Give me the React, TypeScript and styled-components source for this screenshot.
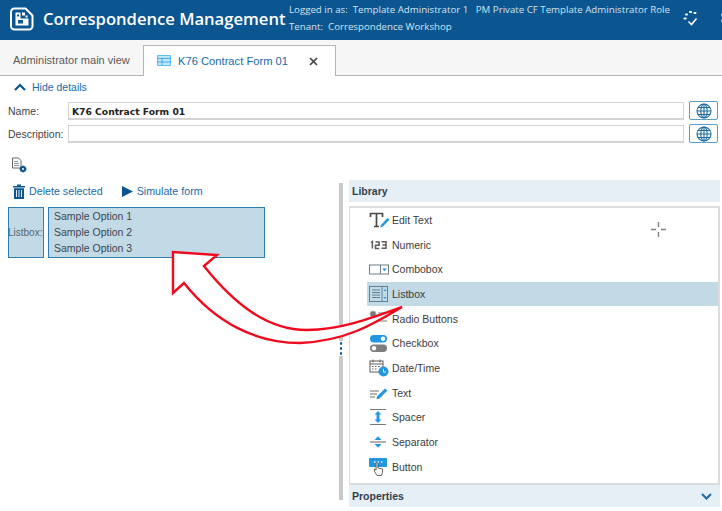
import React from "react";
import styled, { createGlobalStyle } from "styled-components";

const Global = createGlobalStyle`
  html, body { margin: 0; padding: 0; background: #fff; }
  #root { width: 722px; height: 511px; overflow: hidden; }
`;

const Page = styled.div`
  position: relative;
  width: 722px;
  height: 511px;
  overflow: hidden;
  display: flex;
  flex-direction: column;
  font-family: "Liberation Sans", Arial, sans-serif;
  font-size: 10.5px;
  color: #3c3c3c;
`;

const Header = styled.header`
  height: 40px;
  flex: none;
  background: #0b5590;
  display: flex;
  align-items: center;
  color: #fff;
  padding-left: 10px;
`;
const Logo = styled.svg`
  width: 24px;
  height: 24px;
  flex: none;
  margin-top: -2px;
`;
const AppTitle = styled.div`
  font-family: "Open Sans", sans-serif;
  font-weight: 600;
  font-size: 16.6px;
  margin: -3px 0 0 9px;
  width: 246px;
  white-space: nowrap;
`;
const UserInfo = styled.div`
  font-family: "Open Sans", sans-serif;
  font-size: 9.7px;
  line-height: 17px;
  color: #d4e3ee;
  white-space: pre;
  margin-top: -5px;
  flex: none;
`;
const HeaderIcons = styled.div`
  position: absolute;
  right: -8px;
  top: 9px;
  display: flex;
  align-items: center;
  gap: 18px;
`;

const TabBar = styled.nav`
  height: 36px;
  flex: none;
  box-sizing: border-box;
  background: #f6f6f6;
  border-bottom: 1px solid #b5b5b5;
  display: flex;
  align-items: flex-end;
`;
const Tab = styled.div<{ $active?: boolean }>`
  box-sizing: border-box;
  display: flex;
  align-items: center;
  height: ${(p) => (p.$active ? "31px" : "30px")};
  width: ${(p) => (p.$active ? "193px" : "143px")};
  padding-left: 13px;
  font-size: ${(p) => (p.$active ? "11.2px" : "11px")};
  color: ${(p) => (p.$active ? "#1a6aa5" : "#5a5a5a")};
  background: ${(p) => (p.$active ? "#fff" : "transparent")};
  border: ${(p) => (p.$active ? "1px solid #b5b5b5" : "none")};
  border-bottom: none;
  margin-bottom: ${(p) => (p.$active ? "-1px" : "0")};
`;
const TabLabel = styled.span`
  margin-left: 7px;
  width: 131px;
  white-space: nowrap;
`;

const Details = styled.section`
  flex: none;
  padding: 3px 4px 0 8px;
`;
const HideDetails = styled.div`
  display: flex;
  align-items: center;
  gap: 6px;
  height: 16px;
  margin: 0 0 6px 6px;
  color: #1a6aa5;
  font-size: 10.5px;
`;
const FieldRow = styled.div`
  display: flex;
  align-items: center;
  height: 19px;
  margin-top: 4px;
`;
const FieldLabel = styled.label`
  width: 60px;
  flex: none;
  font-size: 10.5px;
  color: #3f3f3f;
`;
const FieldInput = styled.div`
  width: 616px;
  height: 18px;
  box-sizing: border-box;
  flex: none;
  border: 1px solid #d4d4d4;
  border-bottom-width: 2px;
  padding: 2px 0 0 3px;
  font-family: "DejaVu Sans", sans-serif;
  font-weight: 700;
  font-size: 9.2px;
  line-height: 14px;
  color: #222;
  white-space: nowrap;
`;
const GlobeButton = styled.button`
  width: 29px;
  height: 19px;
  box-sizing: border-box;
  flex: none;
  margin-left: 5px;
  padding: 0;
  background: #fff;
  border: 1.5px solid #5b9fc6;
  border-radius: 2px;
  display: flex;
  align-items: center;
  justify-content: center;
`;
const SettingsRow = styled.div`
  height: 20px;
  margin: 14px 0 0 3px;
  display: flex;
  align-items: flex-start;
`;

const Body = styled.div`
  flex: 1;
  min-height: 0;
  display: flex;
`;
const LeftPane = styled.div`
  width: 339px;
  flex: none;
  padding: 6px 0 0 8px;
  box-sizing: border-box;
`;
const Toolbar = styled.div`
  display: flex;
  align-items: center;
  height: 16px;
  margin-left: 5px;
  color: #1a6aa5;
  font-size: 10.7px;
`;
const ToolButton = styled.div`
  display: flex;
  align-items: center;
  gap: 4px;
  margin-right: 19px;
  white-space: nowrap;
`;
const Canvas = styled.div`
  display: flex;
  gap: 4px;
  margin-top: 8px;
`;
const SelectedBlock = styled.div`
  box-sizing: border-box;
  height: 51px;
  background: #c2d9e6;
  border: 1px solid #2f7cb0;
  overflow: hidden;
`;
const BlockLabel = styled(SelectedBlock)`
  width: 36px;
  display: flex;
  align-items: center;
  font-size: 10px;
  text-indent: -1px;
  color: #55646e;
  white-space: nowrap;
`;
const OptionList = styled(SelectedBlock)`
  width: 217px;
  padding: 1px 0 0 5px;
`;
const OptionLine = styled.div`
  height: 16px;
  line-height: 15px;
  font-size: 10.5px;
  color: #3c4850;
`;

const Splitter = styled.div`
  position: relative;
  width: 4px;
  flex: none;
  background: #c9c9c9;
  margin-top: 6px;
  margin-bottom: 11px;
`;
const SplitterDots = styled.div`
  position: absolute;
  left: 0;
  top: 158px;
  height: 15px;
  width: 4px;
  background: #fff;
  display: flex;
  flex-direction: column;
  align-items: center;
  justify-content: space-around;
`;
const Dot = styled.i`
  width: 2.5px;
  height: 2.5px;
  border-radius: 50%;
  background: #0b5590;
`;

const RightPane = styled.div`
  flex: 1;
  min-width: 0;
  margin-left: 6px;
  padding-top: 3px;
  display: flex;
  flex-direction: column;
`;
const PanelHeader = styled.div`
  height: 22px;
  flex: none;
  margin-right: 2px;
  background: #e6eff5;
  display: flex;
  align-items: center;
  justify-content: space-between;
  padding: 0 8px 0 3px;
  font-weight: 700;
  font-size: 10.5px;
  color: #30414d;
`;
const LibraryBox = styled.div`
  box-sizing: border-box;
  position: relative;
  height: 279.5px;
  flex: none;
  margin: 3.5px 2px 0 0;
  border: 1px solid #dcdcdc;
  border-width: 2px 2px 2px 1px;
`;
const LibItem = styled.div<{ $selected?: boolean }>`
  height: 24.7px;
  display: flex;
  align-items: center;
  margin-left: 17px;
  padding-left: 2px;
  background: ${(p) => (p.$selected ? "#c2d9e6" : "transparent")};
  font-size: 10.5px;
  color: #3c3c3c;
`;
const LibIcon = styled.svg`
  width: 21px;
  height: 18px;
  flex: none;
  margin-right: 2px;
`;
const Crosshair = styled.svg`
  position: absolute;
  left: 300px;
  top: 13px;
  width: 17px;
  height: 17px;
`;
const ArrowOverlay = styled.svg`
  position: absolute;
  left: 0;
  top: 0;
  width: 722px;
  height: 511px;
  pointer-events: none;
`;

const Globe = () => (
  <svg width="16" height="16" viewBox="0 0 16 16" fill="none" stroke="#1f6c9f" strokeWidth="1.1">
    <circle cx="8" cy="8" r="7" />
    <ellipse cx="8" cy="8" rx="3.2" ry="7" />
    <path d="M8 1v14M1 8h14M2 4.5h12M2 11.5h12" />
  </svg>
);

const blue = "#2196e3";
const icons: Record<string, React.ReactNode> = {
  edit: (
    <>
      <path d="M1.5 6V2.5h12V6M7.5 2.5V15M5 15.5h5" stroke="#4a4a4a" strokeWidth="1.7" fill="none" />
      <path d="M12 14l6.5-7 2 1.5-6.5 7-2.8 1z" fill={blue} />
    </>
  ),
  numeric: (
    <g fill="none" stroke="#5c5c5c" strokeWidth="1.5">
      <path d="M2 6.5l1.4-1v7" />
      <path d="M6.5 6h3.6v3.2H6.5v3.2h3.8" />
      <path d="M12.5 5.8h4.5v6.5h-4.5M13.5 9h3.5" />
    </g>
  ),
  combo: (
    <>
      <rect x="0.5" y="5" width="19" height="9" fill="#fff" stroke="#6d7d88" />
      <path d="M11.5 5v9" stroke="#6d7d88" />
      <path d="M13.2 8.5h4.6l-2.3 2.7z" fill={blue} />
    </>
  ),
  list: (
    <>
      <rect x="0.5" y="1.5" width="18" height="15" fill="none" stroke="#5f8099" />
      <path d="M13 1.5v15M3 5h8M3 7.5h8M3 10h8M3 12.5h8" stroke="#5f8099" fill="none" />
      <path d="M14.5 6l1.5-2 1.5 2zM14.5 12l1.5 2 1.5-2z" fill={blue} />
    </>
  ),
  radio: (
    <>
      <circle cx="4" cy="4" r="3" fill="#7a7a7a" stroke="#aaa" />
      <path d="M9 3h9M9 7h9M2 11h16" stroke="#7a7a7a" strokeWidth="1.2" />
    </>
  ),
  check: (
    <>
      <rect x="1" y="1" width="17" height="7.5" rx="3.7" fill={blue} />
      <circle cx="14" cy="4.7" r="2.2" fill="#fff" />
      <rect x="1" y="10.5" width="17" height="7.5" rx="3.7" fill="#7d7d7d" />
      <circle cx="5" cy="14.2" r="2.2" fill="#fff" />
    </>
  ),
  date: (
    <>
      <rect x="1" y="2" width="13" height="11" fill="none" stroke="#5c5c5c" />
      <path d="M1 5h13M4 0.5v3M11 0.5v3" stroke="#5c5c5c" />
      <path d="M3 7.5h1.5M6 7.5h1.5M9 7.5h1.5M3 10h1.5M6 10h1.5" stroke="#5c5c5c" />
      <circle cx="14.5" cy="12.5" r="5" fill={blue} />
      <path d="M14.5 10v3h2.5" stroke="#fff" fill="none" />
    </>
  ),
  text: (
    <>
      <path d="M1 7h9M1 10h7M1 13h5" stroke="#6d6d6d" strokeWidth="1.2" />
      <path d="M8 12.5l8-8 2.5 2-8 8-3 .7z" fill={blue} />
    </>
  ),
  spacer: (
    <>
      <path d="M1 1.5h16M1 16.5h16" stroke="#7a7a7a" strokeWidth="1.2" />
      <path d="M9 3l3.4 3.5h-2V11.5h2L9 15l-3.4-3.5h2V6.5h-2z" fill={blue} />
    </>
  ),
  separator: (
    <>
      <path d="M1 9h16" stroke="#7a7a7a" strokeWidth="1.2" />
      <path d="M5.5 7l3.5-3.8 3.5 3.8zM5.5 11l3.5 3.8 3.5-3.8z" fill={blue} />
    </>
  ),
  button: (
    <>
      <rect x="0" y="0" width="18" height="9" rx="1" fill={blue} />
      <path d="M5 4h1.4M8.5 4h1.4M12 4h1.4" stroke="#fff" strokeWidth="1.3" />
      <path d="M8 17.5l-2.5-4V11l1.6 1V5.5a.9.9 0 0 1 1.8 0V10l4.6 1v3.5L12.5 17.5z" fill="#fff" stroke="#555" strokeWidth=".9" />
    </>
  ),
};

const items = [
  ["edit", "Edit Text"],
  ["numeric", "Numeric"],
  ["combo", "Combobox"],
  ["list", "Listbox"],
  ["radio", "Radio Buttons"],
  ["check", "Checkbox"],
  ["date", "Date/Time"],
  ["text", "Text"],
  ["spacer", "Spacer"],
  ["separator", "Separator"],
  ["button", "Button"],
];

export default function App() {
  return (
    <Page>
      <Global />
      <Header>
        <Logo viewBox="0 0 24 24" fill="none">
          <path d="M4.5 1.5h11l7 7V19a3.5 3.5 0 0 1-3.5 3.5H4.5A3.5 3.5 0 0 1 1 19V5a3.5 3.5 0 0 1 3.5-3.5z" stroke="#fff" strokeWidth="2" />
          <path d="M5.5 5.5h5v6h8v7h-13z" fill="#fff" />
          <rect x="12" y="5.5" width="3" height="3" fill="#fff" />
          <rect x="15.5" y="8.5" width="2" height="2" fill="#fff" />
          <rect x="7" y="7.5" width="2" height="2" fill="#0b5590" />
          <rect x="8" y="13" width="5" height="3.5" fill="#0b5590" />
        </Logo>
        <AppTitle>Correspondence Management</AppTitle>
        <UserInfo>
          {"Logged in as:  Template Administrator 1   PM Private CF Template Administrator Role\nTenant:  Correspondence Workshop"}
        </UserInfo>
        <HeaderIcons>
          <svg width="18" height="18" viewBox="0 0 18 18" fill="none" stroke="#fff" strokeWidth="1.6">
            <path d="M6.5 12.5l3 3 5-6" />
            <path d="M2.5 9.5h1.2M4 5.5h1M8 3h1.2M12.5 4h1" strokeWidth="2" strokeLinecap="round" />
          </svg>
          <svg width="12" height="18" viewBox="0 0 12 18" fill="#fff">
            <circle cx="6" cy="6" r="2.6" />
            <circle cx="6" cy="12" r="2.6" />
          </svg>
        </HeaderIcons>
      </Header>
      <TabBar>
        <Tab>Administrator main view</Tab>
        <Tab $active>
          <svg width="14" height="12" viewBox="0 0 14 12" fill="#bfe6fb" stroke="#5cc0f0" strokeWidth="1.2">
            <rect x="0.5" y="0.5" width="13" height="10" rx="1" />
            <path d="M0.5 3.5h13M0.5 7h13M5 3.5v7" fill="none" stroke="#3aa5e0" strokeWidth=".9" />
          </svg>
          <TabLabel>K76 Contract Form 01</TabLabel>
          <svg width="9" height="9" viewBox="0 0 9 9" stroke="#444" strokeWidth="1.7">
            <path d="M1 1l7 7M8 1L1 8" />
          </svg>
        </Tab>
      </TabBar>
      <Details>
        <HideDetails>
          <svg width="12" height="8" viewBox="0 0 12 8" fill="none" stroke="#0b5590" strokeWidth="2.2">
            <path d="M1 7l5-5 5 5" />
          </svg>
          Hide details
        </HideDetails>
        <FieldRow>
          <FieldLabel>Name:</FieldLabel>
          <FieldInput>K76 Contract Form 01</FieldInput>
          <GlobeButton><Globe /></GlobeButton>
        </FieldRow>
        <FieldRow>
          <FieldLabel>Description:</FieldLabel>
          <FieldInput />
          <GlobeButton><Globe /></GlobeButton>
        </FieldRow>
        <SettingsRow>
          <svg width="17" height="16" viewBox="0 0 17 16" fill="none">
            <path d="M1.5 1h6l2.5 2.5V11H1.5z" stroke="#666" />
            <path d="M3 4.5h4M3 6.5h5M3 8.5h5" stroke="#777" strokeWidth=".8" />
            <circle cx="12" cy="12" r="2" stroke="#0b5590" strokeWidth="2" />
            <path d="M12 8.5v1.5M12 14v1.5M8.5 12H10M14 12h1.5M9.6 9.6l1 1M13.4 13.4l1 1M14.4 9.6l-1 1M10.6 13.4l-1 1" stroke="#0b5590" strokeWidth="1.3" />
          </svg>
        </SettingsRow>
      </Details>
      <Body>
        <LeftPane>
          <Toolbar>
            <ToolButton>
              <svg width="12" height="15" viewBox="0 0 12 15" fill="#0b5590">
                <path d="M0 2h12v1.4H0zM4 .4h4V2H4zM1 4.2h10V15H1z" />
                <path d="M3.5 6v7M6 6v7M8.5 6v7" stroke="#fff" strokeWidth=".9" />
              </svg>
              Delete selected
            </ToolButton>
            <ToolButton>
              <svg width="11" height="11" viewBox="0 0 11 11" fill="#0b5590"><path d="M0 0l11 5.5L0 11z" /></svg>
              Simulate form
            </ToolButton>
          </Toolbar>
          <Canvas>
            <BlockLabel>Listbox:</BlockLabel>
            <OptionList>
              <OptionLine>Sample Option 1</OptionLine>
              <OptionLine>Sample Option 2</OptionLine>
              <OptionLine>Sample Option 3</OptionLine>
            </OptionList>
          </Canvas>
        </LeftPane>
        <Splitter>
          <SplitterDots><Dot /><Dot /><Dot /></SplitterDots>
        </Splitter>
        <RightPane>
          <PanelHeader>Library</PanelHeader>
          <LibraryBox>
            {items.map(([k, label]) => (
              <LibItem key={k} $selected={k === "list"}>
                <LibIcon viewBox="0 0 21 18">{icons[k]}</LibIcon>
                {label}
              </LibItem>
            ))}
            <Crosshair viewBox="0 0 17 17" stroke="#808080" strokeWidth="1.4">
              <path d="M8.5 1v5M8.5 11v5M1 8.5h5M11 8.5h5" />
            </Crosshair>
          </LibraryBox>
          <PanelHeader>
            Properties
            <svg width="11" height="7" viewBox="0 0 11 7" fill="none" stroke="#1a6aa5" strokeWidth="2">
              <path d="M1 1l4.5 4.5L10 1" />
            </svg>
          </PanelHeader>
        </RightPane>
      </Body>
      <ArrowOverlay viewBox="0 0 722 511">
        <path
          d="M402 307C372 325 345 341 300 343C255 343 215 322 184 283L173 293L173 252L217 255L204 266C235 305 268 330 307 330C340 330 372 318 402 307Z"
          fill="#fff"
          stroke="#f00a1e"
          strokeWidth="2.4"
          strokeLinejoin="miter"
        />
      </ArrowOverlay>
    </Page>
  );
}
